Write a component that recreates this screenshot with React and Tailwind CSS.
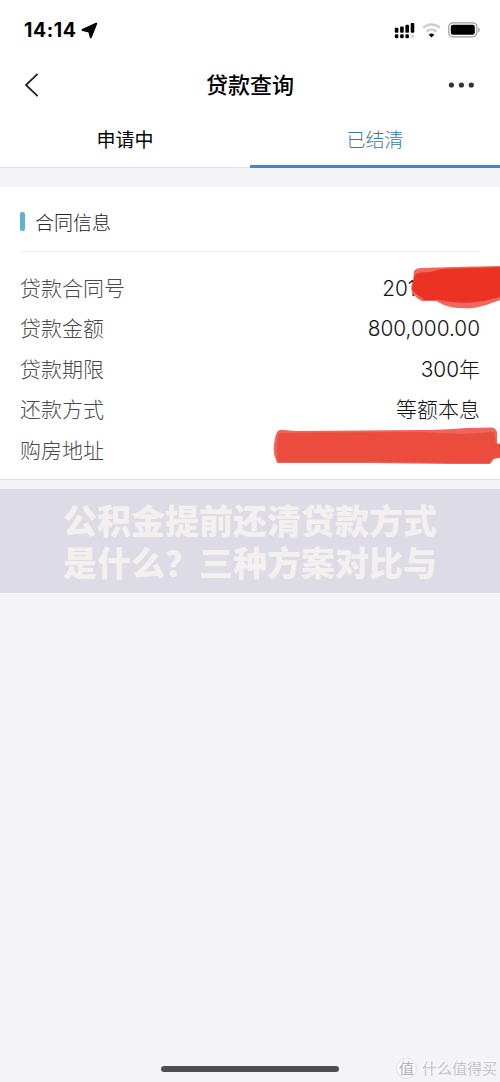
const rows = [
  { label: '贷款合同号', number: '201', mask: 'number' },
  { label: '贷款金额', number: '800,000.00' },
  { label: '贷款期限', number: '300', text: '年' },
  { label: '还款方式', text: '等额本息' },
  { label: '购房地址', mask: 'address' },
];

function StatusBar() {
  return (
    <div className="flex h-[60px] items-center justify-between pr-[19px] pl-[24px]">
      <div className="flex items-center gap-[5px]">
        <span className="pt-[2px] font-['Inter',sans-serif] text-[19.5px] font-bold leading-none tracking-[0.55px] text-black">14:14</span>
        <svg width="17" height="17" viewBox="0 0 17 17">
          <path d="M15.2 1.6 9.8 15.2 8.2 9.6 1.6 8Z" fill="#000" stroke="#000" strokeWidth="2" strokeLinejoin="round" />
        </svg>
      </div>
      <div className="flex items-center gap-[7px]">
        <svg width="21" height="17" viewBox="0 0 21 17" fill="#000">
          <rect x="0.8" y="5.8" width="3.6" height="5" rx="1" />
          <rect x="6.1" y="4.5" width="3.6" height="6.3" rx="1" />
          <rect x="11.4" y="2.7" width="3.6" height="8.1" rx="1" />
          <rect x="16.7" y="1" width="3.6" height="9.8" rx="1" />
          <rect x="0.8" y="12.3" width="3.6" height="4" rx="1.4" />
          <rect x="6.1" y="12.3" width="3.6" height="4" rx="1.4" />
          <rect x="11.4" y="12.3" width="3.6" height="4" rx="1.4" />
          <rect x="16.9" y="12.6" width="3" height="3.4" rx="1" fill="#d4d4d4" />
        </svg>
        <svg width="19" height="15" viewBox="0 0 19 15" fill="none">
          <path d="M1.2 4.9a12 12 0 0 1 16.6 0" stroke="#cfcfcf" strokeWidth="2.4" />
          <path d="M4.4 8.6a7.4 7.4 0 0 1 10.2 0" stroke="#cfcfcf" strokeWidth="2.4" />
          <path d="M9.5 14.6 6.7 11.8a4 4 0 0 1 5.6 0Z" fill="#000" />
        </svg>
        <svg width="33" height="16" viewBox="0 0 33 16">
          <rect x="0.8" y="0.8" width="28" height="14" rx="4" fill="none" stroke="#9b9b9b" strokeWidth="1.2" />
          <rect x="2.8" y="2.8" width="24" height="10" rx="2.2" fill="#000" />
          <path d="M30.3 5.4c1.7.6 1.7 4.2 0 4.8Z" fill="#8c8c8c" />
        </svg>
      </div>
    </div>
  );
}

function NavBar() {
  return (
    <div className="grid h-[50px] grid-cols-[1fr_auto_1fr] items-center px-[24px]">
      <svg width="16" height="26" viewBox="0 0 16 26" fill="none">
        <path d="M13.6 1.8 2 13l11.6 11.2" stroke="#222" strokeWidth="1.8" />
      </svg>
      <h1 className="pt-[1px] text-[22px] font-medium leading-none text-black">贷款查询</h1>
      <svg className="justify-self-end" width="28" height="8" viewBox="0 0 28 8" fill="#333">
        <circle cx="3.4" cy="4" r="2.6" />
        <circle cx="13.4" cy="4" r="2.6" />
        <circle cx="23.3" cy="4" r="2.6" />
      </svg>
    </div>
  );
}

function Tabs() {
  return (
    <div className="grid h-[58px] grid-cols-2 text-[19px]">
      <div className="flex items-center justify-center border-b border-[#e2e2e6] pt-[6px] text-black">申请中</div>
      <div className="flex items-center justify-center border-b-[3px] border-[#4a86c0] pt-[8px] font-light text-[#3478ae]">已结清</div>
    </div>
  );
}

// hand-drawn strokes that hide the contract number
function NumberMask() {
  return (
    <svg className="absolute top-[-6px] right-[-20px]" width="92" height="46" viewBox="0 0 92 46">
      <path d="M6 8Q8 5 14 5L44 4 92 3V37Q80 42 66 45 46 46 36 42L28 38 14 38Q7 35 4 29 2 24 5 18Z" fill="#f0685d" />
      <path d="M7 12Q9 9 22 9L34 6 92 4V34L76 38Q60 41 44 39L30 37 17 37Q9 32 4 27 5 18 7 12Z" fill="#ec3323" />
    </svg>
  );
}

function AddressMask() {
  return (
    <svg className="absolute top-[-4px] right-[-20px]" width="228" height="40" viewBox="0 0 228 40">
      <path d="M5 5Q7 2 12 3L24 4 146 3Q168 3 194 1L220 .5Q226 2 225 8V16L228 17V31L222 32 218 37 180 37 98 36 5 36 2 27Q1 14 5 5Z" fill="#ee665b" />
      <path d="M7 6Q70 5 150 5L190 7 222 5 224 17H228V30L221 31 217 36 180 36 98 35 6 35Q3 18 7 6Z" fill="#eb4c3e" />
    </svg>
  );
}

function ContractCard() {
  return (
    <section className="mt-[19px] h-[293px] border-b border-[#e2e2e6] bg-white px-5">
      <div className="flex h-[65px] items-center gap-[10px] border-b border-[#f0f0f2] pt-[5px]">
        <span className="h-[19px] w-[5px] rounded-[2px] bg-[#62b0d4]" />
        <h2 className="pt-[3px] text-[19px] font-light leading-none text-[#222]">合同信息</h2>
      </div>
      <dl className="pt-[17px] text-[21px] font-light leading-[40.4px]">
        {rows.map((row) => (
          <div key={row.label} className="relative flex h-[40.4px] justify-between">
            <dt className="text-[#4a4a4a]">{row.label}</dt>
            <dd className={row.mask ? 'mr-[64px] text-[#111]' : 'text-[#111]'}>
              {row.number && <span className="font-['Inter',sans-serif] text-[20.8px]">{row.number}</span>}
              {row.text}
            </dd>
            {row.mask === 'number' && <NumberMask />}
            {row.mask === 'address' && <AddressMask />}
          </div>
        ))}
      </dl>
    </section>
  );
}

export default function App() {
  return (
    <div className="relative flex h-[1082px] w-[500px] flex-col overflow-hidden bg-[#f3f3f8] font-['Liberation_Sans','Noto_Sans_CJK_SC',sans-serif]">
      <header className="bg-white">
        <StatusBar />
        <NavBar />
        <Tabs />
      </header>
      <ContractCard />
      <div className="mt-[9px] h-[104px] bg-[#dddbe5] pt-[12px] text-center text-[34px] font-black leading-[42px] text-[#f3f0ef]">
        <p>公积金提前还清贷款方式</p>
        <p>是什么？三种方案对比与</p>
      </div>
      <footer className="mt-auto grid h-[32px] grid-cols-[1fr_178px_1fr] items-center">
        <span className="col-start-2 mt-[6px] h-[6px] rounded-full bg-[#504e54]" />
        <div className="flex items-center justify-end gap-[5px] pt-[4px] pr-[3px] text-[#c2c2c7]">
          <span className="flex size-[21px] shrink-0 items-center justify-center rounded-full border border-[#e0e0e4] bg-[#fafafc] text-[15px] leading-none text-[#b0b0b5]">值</span>
          <span className="whitespace-nowrap text-[15px] leading-none [text-shadow:-1px_-1px_0_#fff]">什么值得买</span>
        </div>
      </footer>
    </div>
  );
}
